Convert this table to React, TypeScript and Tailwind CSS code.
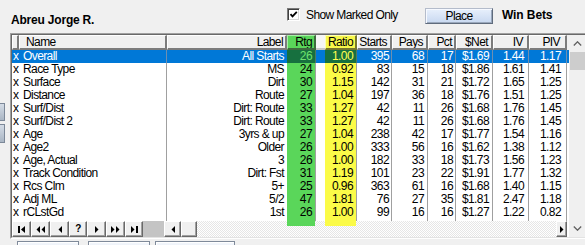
import React from "react";

const rows: string[][] = [
  ["Overall", "All Starts", "26", "1.00", "395", "68", "17", "$1.69", "1.44", "1.17"],
  ["Race Type", "MS", "24", "0.92", "83", "15", "18", "$1.86", "1.61", "1.41"],
  ["Surface", "Dirt", "30", "1.15", "142", "31", "21", "$1.72", "1.65", "1.25"],
  ["Distance", "Route", "27", "1.04", "197", "36", "18", "$1.76", "1.51", "1.25"],
  ["Surf/Dist", "Dirt: Route", "33", "1.27", "42", "11", "26", "$1.68", "1.76", "1.45"],
  ["Surf/Dist 2", "Dirt: Route", "33", "1.27", "42", "11", "26", "$1.68", "1.76", "1.45"],
  ["Age", "3yrs & up", "27", "1.04", "238", "42", "17", "$1.77", "1.54", "1.16"],
  ["Age2", "Older", "26", "1.00", "333", "56", "16", "$1.62", "1.38", "1.12"],
  ["Age, Actual", "3", "26", "1.00", "182", "33", "18", "$1.73", "1.56", "1.23"],
  ["Track Condition", "Dirt: Fst", "31", "1.19", "101", "23", "22", "$1.91", "1.77", "1.32"],
  ["Rcs Clm", "5+", "25", "0.96", "363", "61", "16", "$1.68", "1.40", "1.15"],
  ["Adj ML", "5/2", "47", "1.81", "76", "27", "35", "$1.81", "2.47", "1.18"],
  ["rCLstGd", "1st", "26", "1.00", "99", "16", "16", "$1.27", "1.22", "0.82"],
];

const bodyCls = [
  "w-[7px] pl-[1px]",
  "w-[148px] pl-[4px] border-r border-[#a0a0a0]",
  "w-[120px] pr-[3px] text-right",
  "w-[29px] pr-[3px] text-right border-r border-[#a0a0a0] bg-[#5ad65a]",
  "w-[9px]",
  "w-[32px] pr-[3px] text-right border-r border-[#a0a0a0] bg-[#fbfb48]",
  "w-[35px] pr-[2px] text-right border-r border-[#a0a0a0]",
  "w-[36px] pr-[3px] text-right border-r border-[#a0a0a0]",
  "w-[28px] pr-[2px] text-right border-r border-[#a0a0a0]",
  "w-[37px] pr-[3px] text-right border-r border-[#a0a0a0]",
  "w-[36px] pr-[4px] text-right border-r border-[#a0a0a0]",
  "w-[38px] pr-[5px] text-right border-r border-[#a0a0a0]",
];

const selCls = [
  "w-[7px] pl-[1px]",
  "w-[148px] pl-[4px] border-r border-[#6d8fb0]",
  "w-[120px] pr-[3px] text-right",
  "w-[29px] pr-[3px] text-right border-r border-[#4f7a60] bg-[#17703f] text-[#6ee26e]",
  "w-[9px]",
  "w-[32px] pr-[3px] text-right border-r border-[#4f7a60] bg-[#17703f] text-[#ffff50]",
  "w-[35px] pr-[2px] text-right border-r border-[#6d8fb0]",
  "w-[36px] pr-[3px] text-right border-r border-[#6d8fb0]",
  "w-[28px] pr-[2px] text-right border-r border-[#6d8fb0]",
  "w-[37px] pr-[3px] text-right border-r border-[#6d8fb0]",
  "w-[36px] pr-[4px] text-right border-r border-[#6d8fb0]",
  "w-[38px] pr-[5px] text-right border-r border-[#6d8fb0]",
];

const hGray =
  "border-t border-l border-r-2 border-b-2 border-t-white border-l-white border-r-[#7c7c7c] border-b-[#7c7c7c] bg-[#f0f0f0]";

const headers: { t: string; c: string }[] = [
  { t: "", c: "w-[7px] " + hGray },
  { t: "Name", c: "w-[148px] pl-[6px] " + hGray },
  { t: "Label", c: "w-[120px] pr-[2px] text-right " + hGray },
  {
    t: "Rtg",
    c: "w-[29px] pr-[2px] text-right border-t border-l border-r-2 border-b-2 border-t-[#a8eea8] border-l-[#a8eea8] border-r-[#3e6a3e] border-b-[#3e6a3e] bg-[#5ad65a]",
  },
  { t: "", c: "w-[9px] bg-[#f6f6f6] border-b-2 border-b-[#c8c8c8]" },
  {
    t: "Ratio",
    c: "w-[32px] pr-[2px] text-right border-t border-l border-r-2 border-b-2 border-t-[#ffffb4] border-l-[#ffffb4] border-r-[#76762e] border-b-[#76762e] bg-[#f7f74a]",
  },
  { t: "Starts", c: "w-[35px] pr-[3px] text-right " + hGray },
  { t: "Pays", c: "w-[36px] pr-[3px] text-right " + hGray },
  { t: "Pct", c: "w-[28px] pr-[2px] text-right " + hGray },
  { t: "$Net", c: "w-[37px] pr-[3px] text-right " + hGray },
  { t: "IV", c: "w-[36px] pr-[4px] text-right " + hGray },
  { t: "PIV", c: "w-[38px] pr-[5px] text-right " + hGray },
];

const btn3d =
  "h-full flex items-center justify-center bg-[#f0f0f0] border-t border-l border-r border-b border-t-white border-l-white border-r-[#696969] border-b-[#696969] shadow-[inset_-1px_-1px_0_#a0a0a0]";

function NavIcon({ kind }: { kind: number }) {
  const f = "#000";
  switch (kind) {
    case 0:
      return (
        <svg width="7" height="7" viewBox="0 0 7 7">
          <rect x="0" y="0" width="2" height="7" fill={f} />
          <polygon points="7,0 3,3.5 7,7" fill={f} />
        </svg>
      );
    case 1:
      return (
        <svg width="9" height="7" viewBox="0 0 9 7">
          <polygon points="4,0 0.5,3.5 4,7" fill={f} />
          <polygon points="9,0 5.5,3.5 9,7" fill={f} />
        </svg>
      );
    case 2:
      return (
        <svg width="4" height="7" viewBox="0 0 4 7">
          <polygon points="4,0 0.5,3.5 4,7" fill={f} />
        </svg>
      );
    case 3:
      return <span className="text-[10px] font-bold leading-[10px]">?</span>;
    case 4:
      return (
        <svg width="4" height="7" viewBox="0 0 4 7">
          <polygon points="0,0 3.5,3.5 0,7" fill={f} />
        </svg>
      );
    case 5:
      return (
        <svg width="9" height="7" viewBox="0 0 9 7">
          <polygon points="0,0 3.5,3.5 0,7" fill={f} />
          <polygon points="5,0 8.5,3.5 5,7" fill={f} />
        </svg>
      );
    default:
      return (
        <svg width="7" height="7" viewBox="0 0 7 7">
          <polygon points="0,0 3.5,3.5 0,7" fill={f} />
          <rect x="5" y="0" width="2" height="7" fill={f} />
        </svg>
      );
  }
}

export default function App() {
  return (
    <div className="w-[585px] h-[245px] overflow-hidden bg-[#f0f0f0] text-black text-[12px] font-['Liberation_Sans',Arial,sans-serif] tracking-[-0.6px]">
      {/* top bar */}
      <div className="h-[33px] flex items-start">
        <div className="ml-[11px] mt-[13px] w-[276px] shrink-0 font-bold leading-[14px] tracking-[-0.2px]">
          Abreu Jorge R.
        </div>
        <div className="mt-[8px] w-[13px] h-[13px] shrink-0 bg-white border border-t-[#7a7a7a] border-l-[#7a7a7a] border-b-white border-r-white shadow-[inset_1px_1px_0_#404040,inset_-1px_-1px_0_#d8d8d8] flex items-center justify-center">
          <svg width="9" height="9" viewBox="0 0 9 9">
            <path d="M1.5 4.2 L3.5 6.4 L7.8 1.8" stroke="#000" strokeWidth="1.8" fill="none" />
          </svg>
        </div>
        <div className="ml-[6px] mt-[8px] w-[119px] shrink-0 leading-[14px] whitespace-nowrap">
          Show Marked Only
        </div>
        <div className="mt-[8px] w-[68px] h-[16px] shrink-0 border border-t-[#b4bccb] border-l-[#b4bccb] border-r-[#5f6b7c] border-b-[#5f6b7c] bg-gradient-to-b from-[#e8f0fc] to-[#c8d8f0] shadow-[inset_1px_1px_0_#f6f9ff,inset_-1px_-1px_0_#9aa8bc] flex items-center justify-center leading-[14px]">
          Place
        </div>
        <div className="ml-[9px] mt-[8px] shrink-0 font-bold leading-[14px] tracking-[-0.1px] whitespace-nowrap">
          Win Bets
        </div>
      </div>

      {/* middle */}
      <div className="flex">
        <div className="w-[10px] shrink-0 flex flex-col">
          <div className="mt-[70px] w-[5px] h-[18px] border border-l-0 border-[#7c8898] bg-gradient-to-b from-[#d4dce6] to-[#aab6c4]" />
          <div className="mt-[3px] w-[5px] h-[19px] border border-l-0 border-[#7c8898] bg-gradient-to-b from-[#d4dce6] to-[#aab6c4]" />
        </div>

        <div className="flex-1 border-t border-l border-b border-t-[#a0a0a0] border-l-[#a0a0a0] border-b-white">
          <div className="flex border-t border-l border-b border-t-[#696969] border-l-[#696969] border-b-[#e3e3e3]">
            {/* main grid */}
            <div className="w-[557px] shrink-0 flex flex-col">
              {/* header */}
              <div className="flex h-[15px] bg-[#f0f0f0]">
                {headers.map((h, i) => (
                  <div key={i} className={"shrink-0 h-[15px] leading-[12px] whitespace-nowrap overflow-hidden " + h.c}>
                    {h.t}
                  </div>
                ))}
              </div>
              {/* body */}
              <div className="bg-white flex flex-col">
                {rows.map((r, ri) => {
                  const vals = ["x", r[0], r[1], r[2], "", r[3], r[4], r[5], r[6], r[7], r[8], r[9]];
                  const sel = ri === 0;
                  const cls = sel ? selCls : bodyCls;
                  return (
                    <div key={ri} className={"flex h-[13px] " + (sel ? "bg-[#0078d7] text-white" : "")}>
                      {vals.map((v, ci) => (
                        <div
                          key={ci}
                          className={"shrink-0 h-[13px] leading-[13px] whitespace-nowrap overflow-hidden " + cls[ci]}
                        >
                          {v}
                        </div>
                      ))}
                    </div>
                  );
                })}
                <div className="flex h-[2px]">
                  {bodyCls.map((c, ci) => (
                    <div key={ci} className={"shrink-0 h-[2px] " + c} />
                  ))}
                </div>
              </div>
              {/* bottom strip */}
              <div className="flex h-[16px]">
                <div className="flex w-[131px] shrink-0 h-full">
                  {[0, 1, 2, 3, 4, 5, 6].map((k) => (
                    <div key={k} className={"shrink-0 " + (k === 3 || k === 6 ? "w-[18px] " : "w-[19px] ") + btn3d}>
                      <NavIcon kind={k} />
                    </div>
                  ))}
                </div>
                <div className="w-[21px] shrink-0 h-full bg-[#c4c4c4]" />
                <div className={"w-[17px] shrink-0 " + btn3d}>
                  <NavIcon kind={2} />
                </div>
                <div className={"w-[16px] shrink-0 " + btn3d} />
                <div className="flex-1 h-full relative bg-[image:repeating-conic-gradient(#ffffff_0_25%,#e6e6e6_0_50%)] bg-[size:2px_2px]">
                  <div className="absolute left-[90px] top-0 w-[28px] h-[5px] bg-[#5ad65a]" />
                  <div className="absolute left-[128px] top-0 w-[31px] h-[5px] bg-[#fbfb48]" />
                </div>
                <div className={"w-[11px] shrink-0 " + btn3d}>
                  <NavIcon kind={4} />
                </div>
                <div className="w-[2px] shrink-0 h-full bg-white" />
              </div>
            </div>

            {/* vertical scrollbar */}
            <div className="w-[17px] shrink-0 bg-[#f0f0f0] flex flex-col">
              <div className="h-[17px] flex items-center justify-center">
                <svg width="9" height="5" viewBox="0 0 9 5">
                  <polyline points="0.8,4.5 4.5,0.8 8.2,4.5" stroke="#606060" strokeWidth="1.3" fill="none" />
                </svg>
              </div>
              <div className="mx-[1px] h-[18px] bg-[#cdcdcd]" />
              <div className="flex-1" />
              <div className="h-[17px] flex items-center justify-center">
                <svg width="9" height="5" viewBox="0 0 9 5">
                  <polyline points="0.8,0.5 4.5,4.2 8.2,0.5" stroke="#606060" strokeWidth="1.3" fill="none" />
                </svg>
              </div>
            </div>
          </div>
        </div>
      </div>

      {/* bottom buttons (cut off) */}
      <div className="flex mt-[2px]">
        <div className="ml-[17px] w-[62px] h-[20px] shrink-0 border border-[#7f8a9a] bg-gradient-to-b from-[#f4f7fc] to-[#d2ddec] shadow-[inset_1px_1px_0_#ffffff]" />
        <div className="ml-[9px] w-[62px] h-[20px] shrink-0 border border-[#7f8a9a] bg-gradient-to-b from-[#f4f7fc] to-[#d2ddec] shadow-[inset_1px_1px_0_#ffffff]" />
        <div className="ml-[5px] w-[80px] h-[20px] shrink-0 border border-[#7f8a9a] bg-gradient-to-b from-[#f4f7fc] to-[#d2ddec] shadow-[inset_1px_1px_0_#ffffff]" />
      </div>
    </div>
  );
}
